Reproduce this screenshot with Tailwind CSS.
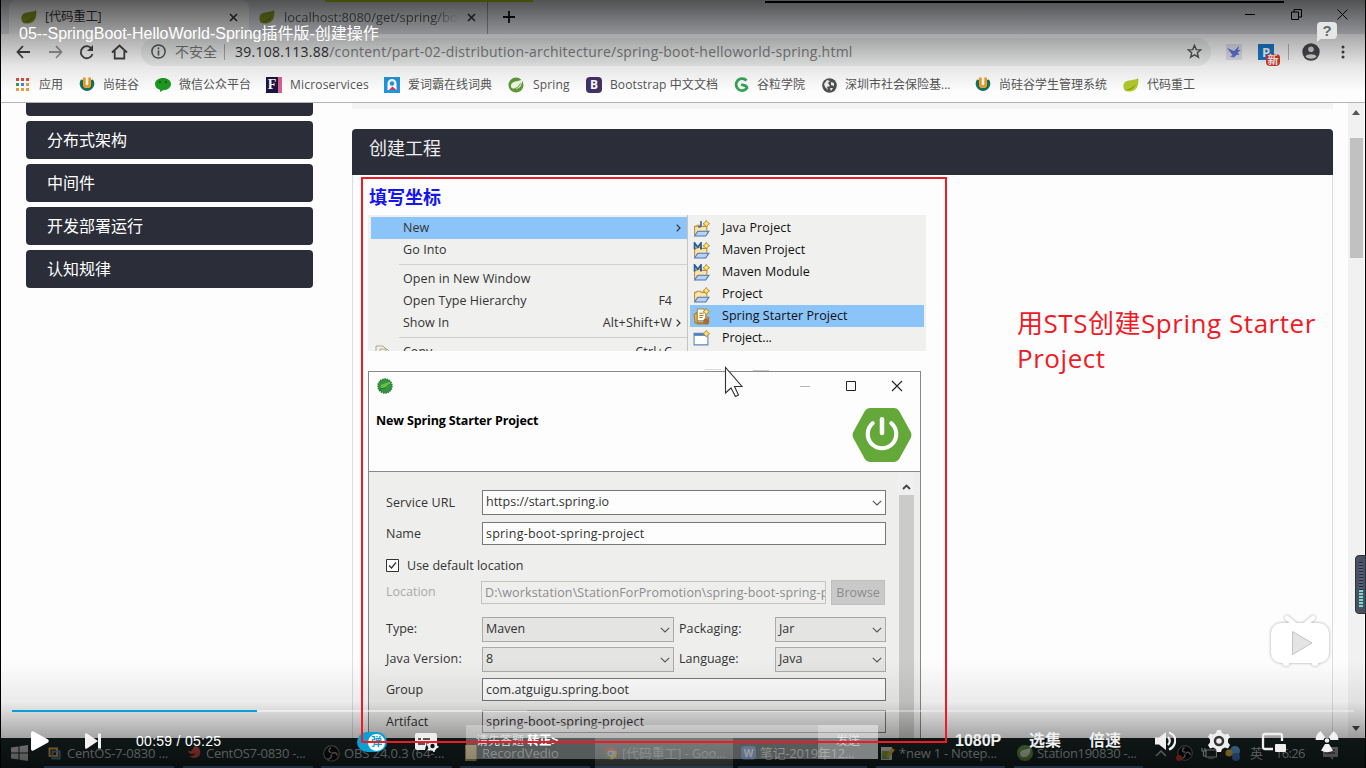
<!DOCTYPE html>
<html lang="zh-CN">
<head>
<meta charset="utf-8">
<title>05--SpringBoot-HelloWorld</title>
<script src="https://cdn.jsdelivr.net/npm/@tailwindcss/browser@4"></script>
</head>
<body class="bg-black">
<svg class="hidden">
  <defs>
    <symbol id="leaf" viewBox="0 0 16 14"><path d="M15 0C12 3 4 1 1.200 5C-.5 8 .5 12 3 13.200C8 14.500 13 12.500 14.600 8C15.600 5 15.500 2 15 0Z" fill="#b3c92c"/><path d="M1.500 11.500C6 11.500 10 9.500 12.500 6.500C11 11 6 13 1.500 11.500Z" fill="#7d9413"/></symbol>
    <symbol id="ulogo" viewBox="0 0 16 16"><path d="M2 3.500A7.300 7.300 0 1 0 14 3.500L12 4V8A4 4 0 0 1 4 8V4Z" fill="#14705a"/><path d="M5.300 1.500V8A2.700 2.700 0 0 0 10.700 8V1.500" fill="none" stroke="#ee9d23" stroke-width="2.800"/></symbol>
    <symbol id="chev" viewBox="0 0 10 6"><path d="M.8.800L5 5L9.200.800" fill="none" stroke="#555" stroke-width="1.100"/></symbol>
    <symbol id="folder" viewBox="0 0 16 16"><path d="M1.500 14V6H3L4 5H7L8 6H13V10" fill="#fbe5a8" stroke="#bd8b3a"/><path d="M1.500 15L4.500 10.500H15L12 15Z" fill="#b9d3f5" stroke="#4a74b8"/></symbol>
    <symbol id="plus" viewBox="0 0 7 7"><path d="M3.500 .3L4.700 2.300L6.700 3.500L4.700 4.700L3.500 6.700L2.300 4.700L.3 3.500L2.300 2.300Z" fill="#fde47a" stroke="#b3861d" stroke-width=".8"/></symbol>
    <symbol id="obs" viewBox="0 0 16 16"><circle cx="8" cy="8" r="7.300" fill="#0a0a0a" stroke="#777"/><path d="M8 7C5 7 5 3.500 7.500 2.500M8.500 8.500C10 6 13.500 7.500 13 10M7.500 9C9 11.500 6 14 4 12.500" fill="none" stroke="#888" stroke-width="1.500"/></symbol>
  </defs>
</svg>
<div class="relative h-[768px] w-[1366px] overflow-hidden bg-black px-px font-['Open_Sans','Noto_Sans_CJK_SC',sans-serif]">
  <!-- recorded desktop -->
  <div class="flex h-full w-[1364px] flex-col bg-[#fdfdfd]">
    <!-- tab strip -->
    <div class="flex h-[34px] shrink-0 items-end bg-[#dcdee3]">
      <div class="ml-2 flex h-[34px] w-[240px] items-center rounded-t-lg bg-[#f4f4f4] pl-3">
        <svg class="h-[14px] w-4 brightness-75"><use href="#leaf"/></svg>
        <span class="ml-2 w-[184px] pt-px text-[12.500px] tracking-[-.3px] text-[#333]">[代码重工]</span>
        <svg class="h-[9px] w-[9px]" viewBox="0 0 9 9"><path d="M1 1L8 8M8 1L1 8" stroke="#333" stroke-width="1.600"/></svg>
      </div>
      <div class="flex h-[34px] w-[239px] items-center border-r border-[#999] pl-[10px]">
        <svg class="h-[14px] w-4 brightness-75"><use href="#leaf"/></svg>
        <span class="ml-[9px] w-[175px] overflow-hidden whitespace-nowrap bg-gradient-to-r from-[#555] from-85% to-transparent bg-clip-text pt-px text-[13px] tracking-[-.03px] text-transparent">localhost:8080/get/spring/boc</span>
        <svg class="ml-2 h-[9px] w-[9px]" viewBox="0 0 9 9"><path d="M1 1L8 8M8 1L1 8" stroke="#333" stroke-width="1.600"/></svg>
      </div>
      <svg class="mb-[11px] ml-[15px] h-3 w-3" viewBox="0 0 12 12"><path d="M6 0V12M0 6H12" stroke="#111" stroke-width="1.800"/></svg>
      <div class="mb-[14px] ml-auto mr-[17px] flex items-center gap-[35px]">
        <svg class="h-[11px] w-[11px]" viewBox="0 0 11 11"><path d="M0 5.500H10" stroke="#000"/></svg>
        <svg class="h-[11px] w-[11px]" viewBox="0 0 11 11"><path d="M.5 3H7.500V10.500H.5ZM3 3V.5H10.500V8H7.500" fill="none" stroke="#000"/></svg>
        <svg class="h-[11px] w-[11px]" viewBox="0 0 11 11"><path d="M.5.500L10.500 10.500M10.500.500L.5 10.500" stroke="#000"/></svg>
      </div>
    </div>
    <!-- address bar -->
    <div class="flex h-[34px] shrink-0 items-center bg-[#fdfdfd] pl-[15px] pt-px">
      <svg class="h-[14px] w-[15px]" viewBox="0 0 15 14"><path d="M7 1L1.500 7L7 13M1.500 7H14" fill="none" stroke="#444" stroke-width="1.800"/></svg>
      <svg class="ml-[17px] h-[14px] w-[15px]" viewBox="0 0 15 14"><path d="M8 1L13.500 7L8 13M13.500 7H1" fill="none" stroke="#999" stroke-width="1.800"/></svg>
      <svg class="ml-4 h-4 w-[15px]" viewBox="0 0 15 16"><path d="M12.500 4.500A6 6 0 1 0 13.500 10" fill="none" stroke="#444" stroke-width="1.800"/><path d="M14 1V7H8Z" fill="#444"/></svg>
      <svg class="ml-[17px] h-4 w-[17px]" viewBox="0 0 17 16"><path d="M1 8.500L8.500 1.500L16 8.500M3.700 7V14.500H13.300V7" fill="none" stroke="#444" stroke-width="1.800"/></svg>
      <div class="ml-[13px] flex h-7 w-[1070px] items-center rounded-full bg-[#edefef] pl-[10px]">
        <svg class="h-[15px] w-[15px]" viewBox="0 0 15 15"><circle cx="7.500" cy="7.500" r="6.600" fill="none" stroke="#555" stroke-width="1.500"/><path d="M7.500 6.500V11.500M7.500 3.500V5.200" stroke="#555" stroke-width="1.600"/></svg>
        <span class="ml-[9px] w-[49px] whitespace-nowrap text-[14px] text-[#777]">不安全</span>
        <span class="h-4 w-px bg-[#aaa]"></span>
        <span class="ml-[10px] whitespace-nowrap text-[14px] tracking-[0.240px] text-[#808080]"><span class="text-[#333]">39.108.113.88</span>/content/part-02-distribution-architecture/spring-boot-helloworld-spring.html</span>
        <svg class="ml-auto mr-[9px] h-[15px] w-[15px]" viewBox="0 0 16 16"><path d="M8 1.500L9.900 6L14.700 6.300L11 9.400L12.200 14.100L8 11.500L3.800 14.100L5 9.400L1.300 6.300L6.100 6Z" fill="none" stroke="#555" stroke-width="1.500"/></svg>
      </div>
      <svg class="ml-[15px] h-4 w-4 bg-[#e3e3f0]" viewBox="0 0 16 16"><path d="M1 4L8 7L13 2L12 6L15 6L11.500 8.500L13.500 10.500L10.500 11L8 13.500L4 12.500L6.500 11Z" fill="#6478dc"/></svg>
      <div class="relative ml-4 h-4 w-4 bg-[#1b7cd0] text-center text-[13px] font-bold leading-4 text-white">P
        <span class="absolute left-2 top-[10px] h-3 w-[14px] rounded-sm bg-[#dc3b30] text-[11px] font-bold leading-[11px]">新</span>
      </div>
      <span class="ml-[14px] h-4 w-px bg-[#bbb]"></span>
      <svg class="ml-[13px] h-[18px] w-[18px]" viewBox="0 0 18 18"><circle cx="9" cy="9" r="8.700" fill="#4a4a4e"/><circle cx="9" cy="6.300" r="2.800" fill="#ddd"/><path d="M3.500 13.500C4.500 10.500 13.500 10.500 14.500 13.500C12 16.500 6 16.500 3.500 13.500Z" fill="#ddd"/></svg>
      <svg class="ml-[21px] h-[14px] w-1" viewBox="0 0 4 14"><g fill="#444"><circle cx="2" cy="2" r="1.500"/><circle cx="2" cy="7" r="1.500"/><circle cx="2" cy="12" r="1.500"/></g></svg>
    </div>
    <!-- bookmarks -->
    <div class="flex h-[35px] shrink-0 items-center whitespace-nowrap border-b border-[#b4b4b4] pl-[15px] text-[12px] text-[#555]">
      <div class="flex w-[63px] items-center gap-[10px]"><svg class="mb-0.5 h-[13px] w-[13px]" viewBox="0 0 13 13"><path d="M0 0H3V3H0ZM5 0H8V3H5ZM10 0H13V3H10Z" fill="#d64f40"/><path d="M0 10H3V13H0ZM10 10H13V13H10ZM5 10H8V13H5ZM10 5H13V8H10Z" fill="#e0a03d"/><path d="M5 5H8V8H5Z" fill="#4285f4"/><path d="M0 5H3V8H0Z" fill="#3a9b56"/></svg>应用</div>
      <div class="flex w-[76px] items-center gap-2"><svg class="mb-0.5 h-4 w-4"><use href="#ulogo"/></svg>尚硅谷</div>
      <div class="flex w-[111px] items-center gap-2"><svg class="h-4 w-4" viewBox="0 0 16 16"><path d="M8 1C12.500 1 16 3.600 16 7C16 10.500 12.500 13.200 8 13.200L5 15V12.800C2 12 0 9.800 0 7C0 3.600 3.500 1 8 1Z" fill="#1d9a22"/><circle cx="5" cy="5" r="1" fill="#0a5010"/><circle cx="11" cy="5" r="1" fill="#0a5010"/></svg>微信公众平台</div>
      <div class="flex w-[118px] items-center gap-2"><div class="h-4 w-4 border-r-4 border-[#d8608f] bg-[#1c1440] text-center font-['Liberation_Serif',serif] text-[14px] font-bold leading-4 text-white">F</div><span class="tracking-[.2px]">Microservices</span></div>
      <div class="flex w-[124px] items-center gap-2"><svg class="h-4 w-4" viewBox="0 0 16 16"><path d="M0 0H16V16H0Z" fill="#2196dc"/><path d="M3.500 13V6.500A4.500 4.500 0 0 1 12.500 6.500V13Z" fill="#fff"/><circle cx="8" cy="6.500" r="2.200" fill="#2196dc"/><path d="M5 13L8.500 9.500L12.500 13Z" fill="#d9355a"/></svg>爱词霸在线词典</div>
      <div class="flex w-[78px] items-center gap-[9px]"><svg class="h-4 w-4" viewBox="0 0 16 16"><circle cx="8" cy="8" r="7.500" fill="#5d9a34"/><path d="M14 2C12 5 4 3 3 8C2.500 11 5 12.500 8 12C13 11.500 14.500 6 14 2Z" fill="#eff7e6"/><path d="M3 12.500C8 12 11 10 12.500 6.500" fill="none" stroke="#5d9a34"/></svg><span class="tracking-[.15px]">Spring</span></div>
      <div class="flex w-[148px] items-center gap-2"><div class="h-4 w-4 rounded-sm bg-[#423265] text-center text-[12px] font-bold leading-4 text-white">B</div><span class="tracking-[.12px]">Bootstrap 中文文档</span></div>
      <div class="flex w-[88px] items-center gap-2"><svg class="h-4 w-[15px]" viewBox="0 0 15 16"><path d="M12.500 3.500A6 6 0 1 0 13 11C13 8 10 8.500 7 7.500" fill="none" stroke="#35a553" stroke-width="2.800"/></svg>谷粒学院</div>
      <div class="flex w-[153px] items-center gap-2"><svg class="h-[15px] w-[15px]" viewBox="0 0 15 15"><circle cx="7.500" cy="7.500" r="7.300" fill="#505050"/><path d="M2 6L5 2L8 3L6 5L8 8L5 9L6 12L3 9ZM9 4L12 5L12 8L9 7ZM8 10L11 10L9 13Z" fill="#eee"/></svg>深圳市社会保险基...</div>
      <div class="flex w-[148px] items-center gap-2"><svg class="mb-0.5 h-4 w-4"><use href="#ulogo"/></svg>尚硅谷学生管理系统</div>
      <div class="flex items-center gap-2"><svg class="h-[14px] w-4"><use href="#leaf"/></svg>代码重工</div>
    </div>
    <!-- web page -->
    <div class="flex h-[635px] shrink-0 overflow-hidden">
      <div class="ml-[25px] flex w-[287px] flex-col gap-[5px] text-[16px] leading-[38px] text-white">
        <div class="h-[13px] overflow-hidden rounded-b bg-[#2b2d39] pl-[21px]"><div class="-mt-[27px]">单一架构</div></div>
        <div class="h-[38px] rounded bg-[#2b2d39] pl-[21px]">分布式架构</div>
        <div class="h-[38px] rounded bg-[#2b2d39] pl-[21px]">中间件</div>
        <div class="h-[38px] rounded bg-[#2b2d39] pl-[21px]">开发部署运行</div>
        <div class="h-[38px] rounded bg-[#2b2d39] pl-[21px]">认知规律</div>
      </div>
      <div class="ml-[39px] w-[981px]">
        <div class="mb-5 h-[6px] bg-[#f4f4f4]"></div>
        <div class="h-[46px] rounded-t bg-[#2b2d39] pl-[17px] text-[18px] leading-[39px] text-[#eee]">创建工程</div>
        <div class="h-[563px] border-x border-[#ddd] pl-[15px]">
          <h3 class="h-10 pl-px text-[18px] font-bold leading-[44px] text-[#1414f0]">填写坐标</h3>
          <!-- context menu -->
          <div class="flex h-[136px] w-[558px] overflow-hidden bg-[#f0f0ef] text-[12.500px] leading-[22px] text-[#333]">
            <div class="w-[320px] border-r border-[#c4c4c4] pl-[3px] pt-[2px]">
              <div class="flex h-[22px] items-center bg-[#8bc4f8] pl-8 pr-[6px]"><span>New</span><svg class="ml-auto h-2 w-[5px]" viewBox="0 0 5 8"><path d="M.7.700L4 4L.7 7.300" fill="none" stroke="#333" stroke-width="1.200"/></svg></div>
              <div class="h-[22px] pl-8 tracking-[.1px]">Go Into</div>
              <div class="my-[3px] ml-7 h-px bg-[#d0d0d0]"></div>
              <div class="h-[22px] pl-8 tracking-[.08px]">Open in New Window</div>
              <div class="flex h-[22px] justify-between pl-8 pr-[15px]"><span class="tracking-[.04px]">Open Type Hierarchy</span><span>F4</span></div>
              <div class="flex h-[22px] items-center pl-8 pr-[6px]"><span>Show In</span><span class="ml-auto mr-[4px] tracking-[.15px]">Alt+Shift+W</span><svg class="h-2 w-[5px]" viewBox="0 0 5 8"><path d="M.7.700L4 4L.7 7.300" fill="none" stroke="#333" stroke-width="1.200"/></svg></div>
              <div class="my-[3px] ml-7 h-px bg-[#d0d0d0]"></div>
              <div class="flex h-[22px] items-center pl-1 pr-[15px]"><svg class="h-[14px] w-4" viewBox="0 0 16 14"><path d="M1 1H8L11 4V12H1ZM5 4H12L15 7V14H5Z" fill="#f4f2e2" stroke="#a8a890"/></svg><span class="ml-3">Copy</span><span class="ml-auto tracking-[.2px]">Ctrl+C</span></div>
            </div>
            <div class="flex-1 pl-[2px] pr-[2px] pt-[2px] text-[#111]">
              <div class="flex h-[22px] items-center pl-[3px]"><svg class="h-[17px] w-[17px]" viewBox="0 0 16 16"><use href="#folder" width="16" height="16"/><path d="M7.500 1V5Q7 7.500 4.500 6" fill="none" stroke="#38689c" stroke-width="1.500"/><use href="#plus" x="9" width="7" height="7"/></svg><span class="ml-3 tracking-[.13px]">Java Project</span></div>
              <div class="flex h-[22px] items-center pl-[3px]"><svg class="h-[17px] w-[17px]" viewBox="0 0 16 16"><use href="#folder" width="16" height="16"/><path d="M1.500 7V1L4.500 5L7.500 1V7" fill="none" stroke="#2b5f95" stroke-width="1.700"/><use href="#plus" x="9" width="7" height="7"/></svg><span class="ml-3">Maven Project</span></div>
              <div class="flex h-[22px] items-center pl-[3px]"><svg class="h-[17px] w-[17px]" viewBox="0 0 16 16"><use href="#folder" width="16" height="16"/><path d="M1.500 7V1L4.500 5L7.500 1V7" fill="none" stroke="#2b5f95" stroke-width="1.700"/><use href="#plus" x="9" width="7" height="7"/></svg><span class="ml-3 tracking-[.1px]">Maven Module</span></div>
              <div class="flex h-[22px] items-center pl-[3px]"><svg class="h-[17px] w-[17px]" viewBox="0 0 16 16"><use href="#folder" width="16" height="16"/><use href="#plus" x="9" y="1" width="7" height="7"/></svg><span class="ml-3">Project</span></div>
              <div class="flex h-[22px] items-center bg-[#8bc4f8] pl-[3px]"><svg class="h-[17px] w-[17px]" viewBox="0 0 16 16"><path d="M1 6L4 4V15H14L15 9L12 8V14H2Z" fill="#f2b34a" stroke="#b17a25"/><path d="M4 1H10L12 4V12H4Z" fill="#fffbe8" stroke="#a98b4a"/><path d="M6 5H10M6 7H10M6 9H9" stroke="#99803c"/><circle cx="12.500" cy="12.500" r="2.800" fill="#a86c35"/><use href="#plus" x="9" width="7" height="7"/></svg><span class="ml-3 tracking-[.05px]">Spring Starter Project</span></div>
              <div class="flex h-[22px] items-center pl-[3px]"><svg class="h-[17px] w-[17px]" viewBox="0 0 16 16"><path d="M1 3H14V14H1Z" fill="#fff" stroke="#5f85b5"/><path d="M1 3H12V5.500H1Z" fill="#4d7fbe"/><use href="#plus" x="9" y="0" width="7" height="7"/></svg><span class="ml-3 tracking-[-.08px]">Project...</span></div>
            </div>
          </div>
          <!-- wizard dialog -->
          <div class="mt-5 h-[380px] w-[553px] border border-[#888] bg-[#eeeeed] text-[12.500px] text-[#333]">
            <div class="flex h-[100px] justify-between border-b border-[#888] bg-[#fdfdfd] pl-[7px] pr-2">
              <div>
                <svg class="ml-px mt-[6px] h-4 w-4" viewBox="0 0 16 16"><circle cx="8" cy="8" r="7" fill="#36943d" stroke="#267a38" stroke-width="1.500" stroke-dasharray="1.500 .8"/><path d="M13.500 3C11 6 4 4.500 3.500 9C5 11.500 13 11 13.500 3Z" fill="#68bd50"/><path d="M2 11C7 11 10 9.500 12.500 6" fill="none" stroke="#197a2c"/></svg>
                <h4 class="mt-[18px] whitespace-nowrap text-[12.500px] font-bold leading-[18px] tracking-[-.14px] text-black">New Spring Starter Project</h4>
              </div>
              <div>
                <div class="mr-[9px] mt-[8px] flex justify-end gap-[34px]">
                  <svg class="h-3 w-3" viewBox="0 0 12 12"><path d="M1 6.500H11" stroke="#b5b5b5"/></svg>
                  <svg class="h-3 w-3" viewBox="0 0 12 12"><path d="M1.500 1.500H10.500V10.500H1.500Z" fill="none" stroke="#222"/></svg>
                  <svg class="h-3 w-3" viewBox="0 0 12 12"><path d="M1 1L11 11M11 1L1 11" stroke="#222" stroke-width="1.100"/></svg>
                </div>
                <svg class="ml-auto mt-[15px] h-[56px] w-[60px]" viewBox="0 0 61 57"><path d="M18 1H43Q46 1 48 4L60 26Q61 28.500 60 31L48 53Q46 56 43 56H18Q15 56 13 53L1 31Q0 28.500 1 26L13 4Q15 1 18 1Z" fill="#64a83a"/><path d="M21 16.500A14.500 14.500 0 1 0 40 16.500" fill="none" stroke="#fff" stroke-width="4.200" stroke-linecap="round"/><path d="M30.500 12.500V26.500" stroke="#fff" stroke-width="4.600" stroke-linecap="round"/></svg>
              </div>
            </div>
            <div class="flex h-[278px]">
              <div class="w-[517px] pl-[17px] pt-[18px]">
                <div class="flex h-[25px] items-center"><span class="w-24 pt-px tracking-[.1px]">Service URL</span><div class="flex h-[25px] w-[404px] items-center justify-between border border-[#777] bg-[#fdfdfd] pl-[3px] pr-[3px]"><span>https://start.spring.io</span><svg class="h-[6px] w-[10px]"><use href="#chev"/></svg></div></div>
                <div class="mt-[7px] flex h-[23px] items-center"><span class="w-24 pt-px">Name</span><div class="flex h-[23px] w-[404px] items-center border border-[#777] bg-[#fdfdfd] pl-[3px] pt-px tracking-[.22px]">spring-boot-spring-project</div></div>
                <div class="mt-[14px] flex h-[13px] items-center"><svg class="mr-2 h-[13px] w-[13px]" viewBox="0 0 13 13"><path d="M.5.500H12.500V12.500H.5Z" fill="#fff" stroke="#333"/><path d="M3 6.500L5.500 9L10 3.500" fill="none" stroke="#333" stroke-width="1.300"/></svg><span class="pt-0.5 tracking-[.02px]">Use default location</span></div>
                <div class="mt-2 flex h-[25px] items-center text-[#8c8c8c]"><span class="w-[95px] text-[#aaa]">Location</span><div class="h-[23px] w-[345px] overflow-hidden whitespace-nowrap border border-[#c4c4c4] pl-[3px] leading-[21px] tracking-[.12px]">D:\workstation\StationForPromotion\spring-boot-spring-project</div><div class="ml-[5px] h-[25px] w-[54px] border border-[#bfbfbf] bg-[#c9c9c9] text-center leading-[23px]">Browse</div></div>
                <div class="mt-3 flex h-[25px] items-center"><span class="w-24">Type:</span><div class="flex h-[25px] w-[192px] items-center justify-between border border-[#aaa] bg-[#e4e4e3] px-[3px]"><span>Maven</span><svg class="h-[6px] w-[10px]"><use href="#chev"/></svg></div><span class="ml-[5px] w-24 tracking-[.1px]">Packaging:</span><div class="flex h-[25px] w-[111px] items-center justify-between border border-[#aaa] bg-[#e4e4e3] px-[3px]"><span>Jar</span><svg class="h-[6px] w-[10px]"><use href="#chev"/></svg></div></div>
                <div class="mt-[5px] flex h-[25px] items-center"><span class="w-24 tracking-[.15px]">Java Version:</span><div class="flex h-[25px] w-[192px] items-center justify-between border border-[#aaa] bg-[#e4e4e3] px-[3px]"><span>8</span><svg class="h-[6px] w-[10px]"><use href="#chev"/></svg></div><span class="ml-[5px] w-24">Language:</span><div class="flex h-[25px] w-[111px] items-center justify-between border border-[#aaa] bg-[#e4e4e3] px-[3px]"><span>Java</span><svg class="h-[6px] w-[10px]"><use href="#chev"/></svg></div></div>
                <div class="mt-[6px] flex h-[23px] items-center"><span class="w-24 pt-px">Group</span><div class="flex h-[23px] w-[404px] items-center border border-[#777] bg-[#fdfdfd] pl-[3px] pt-px tracking-[.05px]">com.atguigu.spring.boot</div></div>
                <div class="mt-[9px] flex h-[23px] items-center"><span class="w-24 pt-px">Artifact</span><div class="flex h-[23px] w-[404px] items-center border border-[#777] bg-[#f2f2f2] pl-[3px] pt-px tracking-[.22px]">spring-boot-spring-project</div></div>
              </div>
              <div class="ml-3 flex w-[16px] flex-col items-center bg-[#f0f0f0] pt-3">
                <svg class="h-[6px] w-[9px] shrink-0" viewBox="0 0 9 6"><path d="M1 5L4.500 1.500L8 5" fill="none" stroke="#444" stroke-width="1.800"/></svg>
                <div class="mt-[5px] h-[255px] w-[15px] bg-[#cbcbca]"></div>
              </div>
            </div>
          </div>
        </div>
      </div>
      <!-- page scrollbar -->
      <div class="ml-[15px] flex w-4 flex-col items-center bg-[#f1f1f1]">
        <svg class="mt-[7px] h-[5px] w-2" viewBox="0 0 8 5"><path d="M0 5L4 0L8 5Z" fill="#555"/></svg>
        <div class="mt-[23px] h-[120px] w-[13px] bg-[#c1c1c1]"></div>
        <svg class="mt-auto mb-[7px] h-[5px] w-2" viewBox="0 0 8 5"><path d="M0 0L4 5L8 0Z" fill="#444"/></svg>
      </div>
    </div>
    <!-- taskbar -->
    <div class="flex h-[30px] shrink-0 items-stretch bg-[#172523] text-[13px] leading-[30px] text-[#b0b4b3]">
      <svg class="ml-[10px] mr-[16px] mt-[7px] h-4 w-[17px]" viewBox="0 0 17 16"><path d="M0 2.500L7.500 1.500V7.500H0ZM8.500 1.300L17 0V7.500H8.500ZM0 8.500H7.500V14.500L0 13.500ZM8.500 8.500H17V16L8.500 14.700Z" fill="#b8b8b8"/></svg>
      <div class="mr-[9px] flex w-[130px] items-center border-b-2 border-[#4b6c9b] pl-1 pt-0.5"><svg class="mr-[6px] h-[13px] w-[13px]" viewBox="0 0 13 13"><path d="M1.500 1.500H9V9H1.500Z" fill="none" stroke="#dc9332" stroke-width="2"/><path d="M4.500 4.500H11.500V11.500H4.500Z" fill="none" stroke="#4689a9" stroke-width="2"/></svg><span class="whitespace-nowrap tracking-[-.2px]">CentOS-7-0830 ...</span></div>
      <div class="mr-2 flex w-[130px] items-center border-b-2 border-[#4b6c9b] pl-1 pt-0.5"><svg class="mr-[5px] h-[14px] w-[14px]" viewBox="0 0 14 14"><path d="M1 4C4 8 6 2 8 0C12 1 14 4 13 8C12 13 5 13 2 10C5 10 8 10 8 7C5 9 1 8 1 4Z" fill="#c34a3d"/></svg><span class="whitespace-nowrap tracking-[-.3px]">CentOS7-0830 -...</span></div>
      <div class="mr-2 flex w-[131px] items-center border-b-2 border-[#4b6c9b] pl-[2px] pt-0.5"><svg class="mr-[4px] h-[17px] w-[17px]"><use href="#obs"/></svg><span class="whitespace-nowrap tracking-[-.1px]">OBS 24.0.3 (64-...</span></div>
      <div class="mr-[5px] flex w-[130px] items-center border-b-2 border-[#4b6c9b] pl-[5px] pt-0.5"><div class="mr-[5px] h-4 w-3 border-r border-[#80642e] bg-[#c5aa65]"></div><span class="whitespace-nowrap">RecordVedio</span></div>
      <div class="mr-[5px] flex w-[138px] items-center border-b-2 border-[#6588b5] bg-[#5b6664] pl-[9px] pt-0.5"><svg class="mr-[5px] h-[13px] w-[13px]" viewBox="0 0 14 14"><circle cx="7" cy="7" r="7" fill="#c94f42"/><path d="M1 3.500L6 12L7 14A7 7 0 0 1 1 3.500Z" fill="#3f8c50"/><path d="M7 14A7 7 0 0 0 13 4H7Z" fill="#d6ae3a"/><circle cx="7" cy="7" r="2.800" fill="#5b8fd5" stroke="#ddd"/></svg><span class="whitespace-nowrap tracking-[-.2px]">[代码重工] - Goo...</span></div>
      <div class="mr-[9px] flex w-[129px] items-center border-b-2 border-[#4b6c9b] pl-[3px] pt-0.5"><div class="mr-[4px] h-[14px] w-[15px] rounded-sm bg-[#356ab0] text-center text-[10px] font-bold leading-[14px] text-[#ddd]">W</div><span class="whitespace-nowrap tracking-[-.3px]">笔记-2019年12...</span></div>
      <div class="mr-[9px] flex w-[129px] items-center border-b-2 border-[#4b6c9b] pl-1 pt-0.5"><svg class="mr-[4px] h-4 w-[15px]" viewBox="0 0 15 16"><path d="M1 2H12V15H1Z" fill="#ccc"/><path d="M2 6H9V14H2Z" fill="#75a740"/><path d="M6 11L12 3L15 5L8 13Z" fill="#dda03a"/></svg><span class="whitespace-nowrap tracking-[-.25px]">*new 1 - Notep...</span></div>
      <div class="flex w-[129px] items-center border-b-2 border-[#4b6c9b] pl-[3px] pt-0.5"><svg class="mr-[4px] h-4 w-4" viewBox="0 0 16 16"><circle cx="8" cy="8" r="8" fill="#5e8f3b"/><path d="M13 3C10 5 4 4 3 8C3 12 6 13 9 12C12 11 14 7 13 3Z" fill="#cbd3c2"/></svg><span class="whitespace-nowrap tracking-[-.3px]">Station190830 -...</span></div>
      <div class="ml-3 flex flex-1 items-center">
        <svg class="h-[7px] w-3" viewBox="0 0 12 7"><path d="M1 6L6 1L11 6" fill="none" stroke="#aaa" stroke-width="1.500"/></svg>
        <div class="relative ml-[10px] h-4 w-4"><svg class="h-4 w-4"><use href="#obs"/></svg><span class="absolute -left-px bottom-0 h-[6px] w-[6px] rounded-full bg-[#d7352b]"></span></div>
        <svg class="ml-2 h-3 w-4" viewBox="0 0 16 12"><path d="M5 3H15.500V10H5ZM7 12H13M1 1V4H4V1M2.500 4V9H5" fill="none" stroke="#c5c5c5" stroke-width="1.200"/></svg>
        <svg class="ml-2 h-[15px] w-4" viewBox="0 0 16 15"><circle cx="10" cy="5" r="5" fill="#5ba1df"/><circle cx="4" cy="7" r="3.500" fill="#e0ae36"/><circle cx="11" cy="11" r="4" fill="#3c7ac2"/></svg>
        <span class="ml-[9px]">英</span>
        <span class="ml-3 tracking-[-.7px]">16:26</span>
        <svg class="ml-[18px] h-4 w-4" viewBox="0 0 16 16"><path d="M0 2H15V12H10V15L7 12H0Z" fill="#999"/><path d="M2 5H12M2 8H12" stroke="#222"/></svg>
      </div>
    </div>
  </div>

  <!-- recorded pointer -->
  <svg class="absolute left-[724px] top-[366px] h-[32px] w-[20px]" viewBox="0 0 20 32"><path d="M1.500 1.500V27L7 22L11.500 30.500L14.500 29L10.500 20.500H18Z" fill="#fff" stroke="#333" stroke-width="1.100"/></svg>
  <div class="absolute left-[705px] top-[369px] h-px w-[16px] bg-[#ddd]"></div>
  <div class="absolute left-[753px] top-[370px] h-px w-[16px] bg-[#ccc]"></div>

  <!-- screen edge strips -->
  <div class="absolute left-[325px] top-0 h-[2px] w-[208px] bg-[#b3cd10]"></div>

  <!-- player shade -->
  <div class="absolute inset-x-0 top-0 h-[92px] bg-[linear-gradient(to_bottom,rgba(0,0,0,.63),rgba(0,0,0,.34)_34px,rgba(0,0,0,.09)_66px,rgba(0,0,0,0))]"></div>
  <div class="absolute inset-x-0 bottom-0 h-[108px] bg-[linear-gradient(to_bottom,rgba(0,0,0,0),rgba(0,0,0,.07)_42px,rgba(0,0,0,.34)_76px,rgba(0,0,0,.6))]"></div>
  <div class="absolute left-[765px] top-px h-[2px] w-[519px] bg-black"></div>
  <div class="absolute left-[19px] top-6 whitespace-nowrap font-['Liberation_Sans','Noto_Sans_CJK_SC',sans-serif] text-[16px] leading-5 text-white">05--SpringBoot-HelloWorld-Spring插件版-创建操作</div>
  <div class="absolute left-[1317px] top-[22px] h-[17px] w-5 rounded-sm bg-[#e6e6e6] text-center font-['Liberation_Sans',sans-serif] text-[15px] font-bold leading-[17px] text-[#666]">?<svg class="absolute left-0 top-[15px] h-[5px] w-[6px]" viewBox="0 0 6 5"><path d="M0 0H6L0 5Z" fill="#e6e6e6"/></svg></div>

  <!-- big play mark -->
  <svg class="absolute left-[1268px] top-[612px] h-[56px] w-[64px] drop-shadow-[0_0_1.5px_rgba(0,0,0,.35)]" viewBox="0 0 64 56"><path d="M19 6L26 12M45 6L38 12" stroke="#fff" stroke-width="4.500" stroke-linecap="round"/><rect x="3" y="11" width="58" height="40" rx="10" fill="#fff"/><circle cx="18" cy="50.500" r="3.500" fill="#fff"/><circle cx="47" cy="50.500" r="3.500" fill="#fff"/><path d="M24.500 19.500L44 31L24.500 42.500Z" fill="#e4e4e4" stroke="#c4c4c4"/></svg>
  <!-- level meter -->
  <div class="absolute left-[1355px] top-[555px] h-[59px] w-[11px] rounded-l border border-[#333] bg-[#4a5064] pl-[3px] pt-[6px]">
    <div class="h-[28px] w-1 bg-[repeating-linear-gradient(to_bottom,#23273d_0_1px,#596078_1px_3px)]"></div>
    <div class="h-[17px] w-1 bg-[repeating-linear-gradient(to_bottom,#74dcc8_0_2px,#4a5064_2px_3px)]"></div>
  </div>

  <!-- progress -->
  <div class="absolute left-3 top-[710px] flex h-[2px] w-[1342px] bg-white/35"><div class="h-[2px] w-[245px] bg-[#05a1d6]"></div><div class="h-[2px] w-[270px] bg-white/25"></div></div>

  <!-- player controls -->
  <div class="absolute left-0 top-[723px] flex h-9 w-full items-center font-['Liberation_Sans','Noto_Sans_CJK_SC',sans-serif] text-[14px] text-white">
    <svg class="ml-[31px] h-5 w-[18px]" viewBox="0 0 18 20"><path d="M0 2Q0-.5 2.500.5L17 8.500Q18.500 10 17 11.500L2.500 19.500Q0 20.500 0 18Z" fill="#fff"/></svg>
    <svg class="ml-9 h-4 w-4" viewBox="0 0 16 16"><path d="M0 1.500Q0-.5 2 .5L13 8V.500H16V15.500H13V8L2 15.500Q0 16.500 0 14.500Z" fill="#f2f2f2"/></svg>
    <span class="ml-[35px] w-[221px] whitespace-nowrap tracking-[.28px]">00:59 / 05:25</span>
    <div class="mt-0.5 flex h-[20px] w-[30px] items-center justify-end rounded-full bg-[#0b9fd6] pr-[2px]"><span class="h-[17px] w-[17px] rounded-full bg-white text-center text-[11px] font-bold leading-[17px] text-[#0b9fd6]">弹</span></div>
    <svg class="ml-[27px] mt-0.5 h-5 w-[25px]" viewBox="0 0 25 20"><path d="M3 1H21Q23 1 23 3V9H13L11 18H3Q1 18 1 16V3Q1 1 3 1Z" fill="#eee"/><path d="M4 7H7M9 7H16M4 12H11" stroke="#555" stroke-width="2"/><circle cx="18.500" cy="14" r="3.500" fill="none" stroke="#eee" stroke-width="2.600"/><circle cx="18.500" cy="14" r="5" fill="none" stroke="#eee" stroke-width="2" stroke-dasharray="2 3.200"/></svg>
    <div class="ml-[27px] mt-0.5 flex h-[34px] w-[412px] items-stretch bg-white/30 text-[12px] leading-[33px] text-[#ddd]">
      <span class="flex-1 pl-[10px]">请先答题 <b class="text-white">转正&gt;</b></span>
      <span class="w-[60px] bg-white/25 text-center text-white/60">发送</span>
    </div>
    <span class="ml-[77px] w-[74px] text-[16px] font-bold text-[#eee]">1080P</span>
    <span class="w-[60px] text-[16px] font-bold text-[#eee]">选集</span>
    <span class="w-[66px] text-[16px] font-bold text-[#eee]">倍速</span>
    <svg class="h-5 w-[21px]" viewBox="0 0 21 20"><path d="M0 6.500H4L11 1V19L4 13.500H0Z" fill="#eee"/><path d="M13 6Q16.500 10 13 14M14 1.500Q22.500 5 19.500 13Q18 17 14 18.500" fill="none" stroke="#eee" stroke-width="2.200"/></svg>
    <svg class="ml-[31px] h-[24px] w-6" viewBox="0 0 24 24"><path d="M9 4L10 1H14L15 4L18 5.500L21 4.500L23 8L21 10.500V13.500L23 16L21 19.500L18 18.500L15 20L14 23H10L9 20L6 18.500L3 19.500L1 16L3 13.500V10.500L1 8L3 4.500L6 5.500Z" fill="#eee"/><circle cx="12" cy="12" r="4" fill="#eee" stroke="#333" stroke-width="2.500"/></svg>
    <svg class="ml-[30px] mt-px h-5 w-[26px]" viewBox="0 0 26 20"><path d="M12 17H4Q2 17 2 15V4Q2 2 4 2H19Q21 2 21 4V9" fill="none" stroke="#eee" stroke-width="2.300"/><rect x="14" y="12" width="11" height="8" rx="1" fill="#eee"/></svg>
    <svg class="ml-[28px] h-[24px] w-6" viewBox="0 0 24 24"><path d="M5.500 2Q1 5 .5 11H8.500L10 8ZM18.500 2Q23 5 23.500 11H15.500L14 8ZM10 15H14L18 21.500Q12 25 6 21.500Z" fill="#f2f2f2"/><circle cx="12" cy="11.500" r="2.300" fill="#eee"/></svg>
  </div>

  <!-- red annotation -->
  <div class="absolute left-[361px] top-[177px] h-[566px] w-[586px] border-2 border-[#f01a26]"></div>
  <div class="absolute left-[1017px] top-[306px] whitespace-nowrap text-[26px] leading-[35px] tracking-[.54px] text-[#f01a26]">用STS创建Spring Starter<br>Project</div>
</div>
</body>
</html>
